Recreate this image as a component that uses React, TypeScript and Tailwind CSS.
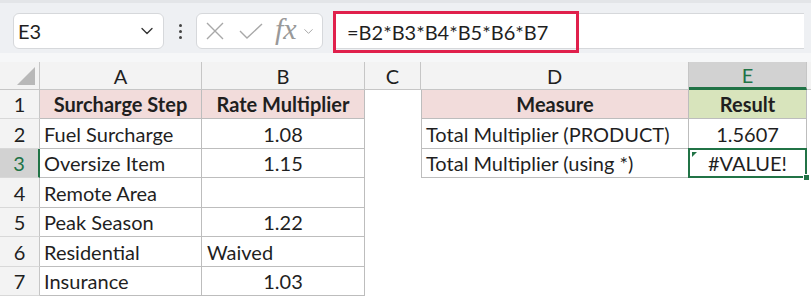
import { ChevronDown } from "lucide-react";

const rows = [
  { n: "1", a: "Surcharge Step", b: "Rate Multiplier", d: "Measure", e: "Result", head: true },
  { n: "2", a: "Fuel Surcharge", b: "1.08", d: "Total Multiplier (PRODUCT)", e: "1.5607" },
  { n: "3", a: "Oversize Item", b: "1.15", d: "Total Multiplier (using *)", e: "#VALUE!" },
  { n: "4", a: "Remote Area", b: "" },
  { n: "5", a: "Peak Season", b: "1.22" },
  { n: "6", a: "Residential", b: "Waived", left: true },
  { n: "7", a: "Insurance", b: "1.03" },
];

const heights = ["h-[29px]", "h-[30px]", "h-[29px]", "h-[30px]", "h-[29px]", "h-[30px]", "h-[29px]"];

export default function App() {
  return (
    <div className="w-[811px] h-[298px] overflow-hidden bg-white text-[#1f1f1f]" style={{ fontFamily: "Lato, 'Open Sans', sans-serif" }}>
      {/* formula bar */}
      <div className="h-[53px] bg-[#eef0f3] border-t-[3px] border-[#e3e5e8] flex items-start pt-[10px]">
        <div className="ml-[13px] w-[151px] h-[36px] bg-white border border-[#d6d8db] rounded-md flex items-center justify-between pl-[4px] pr-[6px]">
          <span className="text-[20px]">E3</span>
          <ChevronDown size={20} strokeWidth={1.6} className="text-[#333]" />
        </div>
        <div className="w-[32px] h-[36px] flex flex-col items-center justify-center gap-[3px]">
          <span className="w-[3px] h-[3px] rounded-full bg-[#444]" />
          <span className="w-[3px] h-[3px] rounded-full bg-[#444]" />
          <span className="w-[3px] h-[3px] rounded-full bg-[#444]" />
        </div>
        <div className="w-[127px] h-[36px] bg-white border border-[#d6d8db] rounded-md flex items-center pl-[8px] text-[#a8a8a8]">
          <svg width="20" height="20" viewBox="0 0 20 20" fill="none" stroke="currentColor" strokeWidth="1.4">
            <path d="M2 2L18 18M18 2L2 18" />
          </svg>
          <svg width="24" height="18" viewBox="0 0 24 18" fill="none" stroke="currentColor" strokeWidth="1.4" className="ml-[14px]">
            <path d="M1 9L8 16L23 2" />
          </svg>
          <span className="ml-[12px] italic text-[30px] leading-none text-[#999] pb-[4px]" style={{ fontFamily: "'Liberation Serif', serif" }}>
            fx
          </span>
          <ChevronDown size={15} strokeWidth={1.6} className="ml-[4px]" />
        </div>
        <div className="relative ml-[10px] flex-1 mr-[7px] h-[36px] bg-white border-y border-[#d6d8db]">
          <div className="absolute left-0 top-[-3px] w-[246px] h-[42px] border-[3px] border-[#e0204c] flex items-center pl-[11px] text-[20px]">
            =B2*B3*B4*B5*B6*B7
          </div>
        </div>
      </div>

      <div className="h-[9px] bg-[#f6f7f8]" />

      {/* grid */}
      <div className="grid grid-cols-[40px_162px_163px_56px_268px_118px_1fr] text-[20px]">
        <div className="h-[28px] bg-[#f3f3f3] border-r border-b border-[#c6c6c6] relative">
          <div className="absolute right-[4px] bottom-[4px] w-0 h-0 border-l-[18px] border-l-transparent border-b-[18px] border-b-[#b8b8b8]" />
        </div>
        {["A", "B", "C", "D"].map((c) => (
          <div key={c} className="h-[28px] bg-[#f3f3f3] border-r border-b border-[#c6c6c6] flex items-center justify-center">
            {c}
          </div>
        ))}
        <div className="h-[28px] bg-[#d2d2d2] border-r border-[#c6c6c6] border-b-[3px] border-b-[#217346] flex items-center justify-center text-[#217346]">
          E
        </div>
        <div className="h-[28px] bg-[#f3f3f3] border-b border-[#c6c6c6]" />

        {rows.map((r, i) => {
          const h = heights[i];
          const sel = r.n === "3";
          return (
            <>
              <div
                key={"n" + r.n}
                className={`${h} flex items-center justify-center border-b border-[#d8d8d8] ${
                  sel ? "bg-[#d2d2d2] text-[#217346] border-r-[2px] border-r-[#217346]" : "bg-[#f3f3f3] border-r border-r-[#c6c6c6]"
                }`}
              >
                {r.n}
              </div>
              <div
                key={"a" + r.n}
                className={`${h} flex items-center border-r border-b border-[#bdbdbd] ${
                  r.head ? "bg-[#f2dcdb] font-bold justify-center" : "pl-[4px]"
                }`}
              >
                {r.a}
              </div>
              <div
                key={"b" + r.n}
                className={`${h} flex items-center border-r border-b border-[#bdbdbd] ${
                  r.head ? "bg-[#f2dcdb] font-bold justify-center" : r.left ? "pl-[5px]" : "justify-center"
                }`}
              >
                {r.b}
              </div>
              <div key={"c" + r.n} className={h} />
              {r.d ? (
                <div
                  key={"d" + r.n}
                  className={`${h} flex items-center border-l border-r border-b border-[#bdbdbd] ${
                    r.head ? "bg-[#f2dcdb] font-bold justify-center" : "pl-[4px]"
                  }`}
                >
                  {r.d}
                </div>
              ) : (
                <div key={"d" + r.n} className={h} />
              )}
              {r.e ? (
                <div
                  key={"e" + r.n}
                  className={`${h} relative flex items-center justify-center border-r border-b border-[#bdbdbd] ${
                    r.head ? "bg-[#d8e4bc] font-bold" : ""
                  }`}
                >
                  {r.e}
                  {sel && (
                    <>
                      <div className="absolute left-[-1px] top-[-1px] right-[-1px] bottom-[-1px] border-2 border-[#217346]" />
                      <div className="absolute left-[3px] top-[3px] w-0 h-0 border-t-[5px] border-t-[#217346] border-r-[5px] border-r-transparent" />
                      <div className="absolute right-[-4px] bottom-[-4px] w-[7px] h-[7px] bg-[#217346] border border-white" />
                    </>
                  )}
                </div>
              ) : (
                <div key={"e" + r.n} className={h} />
              )}
              <div key={"f" + r.n} className={h} />
            </>
          );
        })}
      </div>
    </div>
  );
}
